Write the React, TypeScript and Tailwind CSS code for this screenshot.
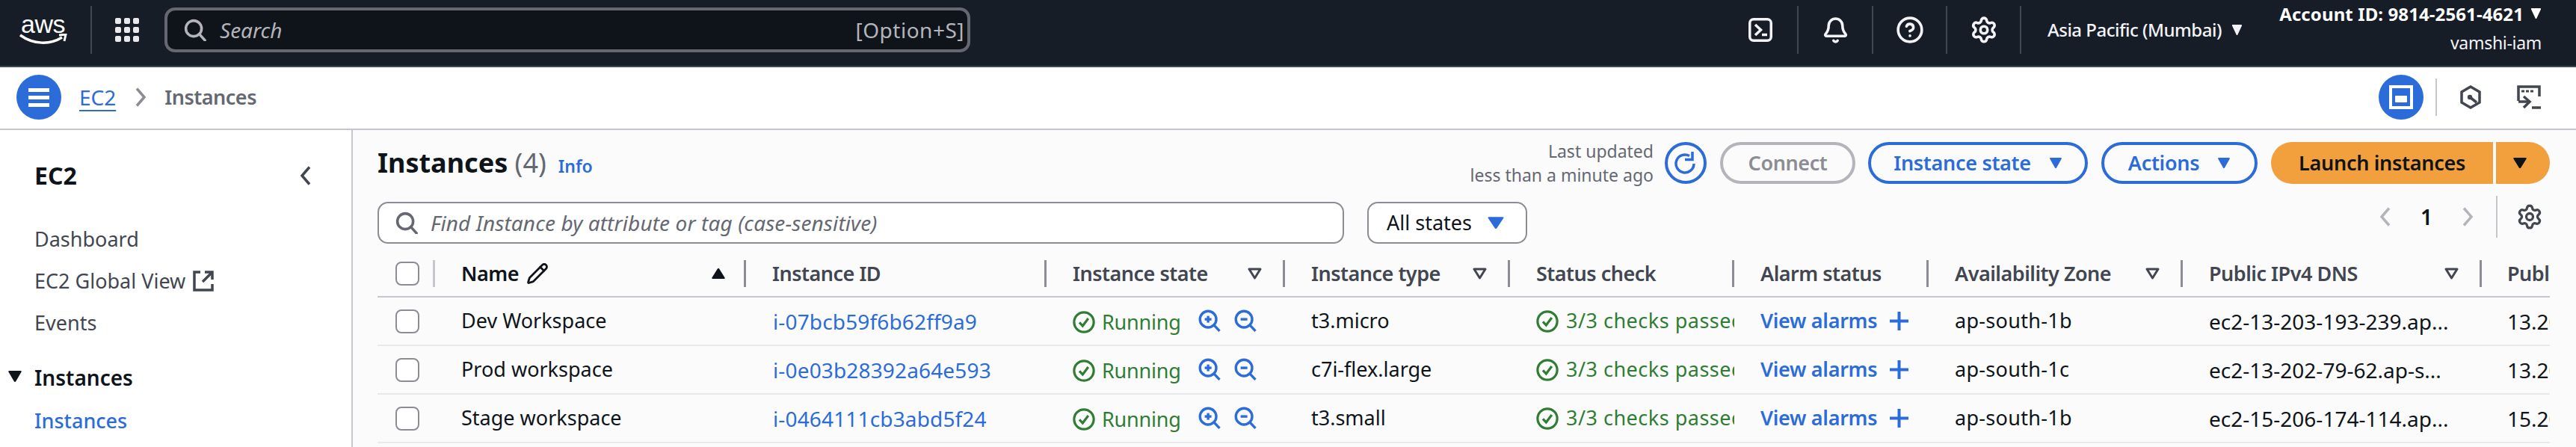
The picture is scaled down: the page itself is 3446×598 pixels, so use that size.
import { Bell, CircleHelp, Pencil, Settings } from "lucide-react";

const GRID_COLS = "grid grid-cols-[77px_416px_402px_319px_301px_300px_260px_340px_400px_91px]";

const INSTANCES = [
  { name: "Dev Workspace", id: "i-07bcb59f6b62ff9a9", type: "t3.micro", zone: "ap-south-1b", dns: "ec2-13-203-193-239.ap...", ip: "13.203.193.239" },
  { name: "Prod workspace", id: "i-0e03b28392a64e593", type: "c7i-flex.large", zone: "ap-south-1c", dns: "ec2-13-202-79-62.ap-s...", ip: "13.202.79.62" },
  { name: "Stage workspace", id: "i-0464111cb3abd5f24", type: "t3.small", zone: "ap-south-1b", dns: "ec2-15-206-174-114.ap...", ip: "15.206.174.114" },
];

const COLUMNS = [
  { label: "Instance ID" },
  { label: "Instance state", filter: true },
  { label: "Instance type", filter: true },
  { label: "Status check" },
  { label: "Alarm status" },
  { label: "Availability Zone", filter: true },
  { label: "Public IPv4 DNS", filter: true },
];

function Caret({ className }: { className: string }) {
  return (
    <svg viewBox="0 0 16 16" preserveAspectRatio="none" className={className} fill="currentColor" stroke="currentColor" strokeWidth="2" strokeLinejoin="round">
      <path d="M2 2h12L8 14z" />
    </svg>
  );
}

function Chevron({ left, className }: { left?: boolean; className: string }) {
  return (
    <svg viewBox="0 0 16 26" className={`h-[26px] w-[16px] shrink-0 ${className}`} fill="none" stroke="currentColor" strokeWidth="3.5">
      <path d={left ? "M14 1.5L4 13l10 11.5" : "M2 1.5L12 13 2 24.5"} />
    </svg>
  );
}

function FilterCaret() {
  return (
    <svg viewBox="0 0 19 16" className="h-[16px] w-[19px] text-[#424650]" fill="none" stroke="currentColor" strokeWidth="3">
      <path d="M2 2h15L9.5 14z" strokeLinejoin="round" />
    </svg>
  );
}

function SearchIcon({ className }: { className: string }) {
  return (
    <svg viewBox="0 0 16 16" className={className} fill="none" stroke="currentColor" strokeWidth="1.9">
      <circle cx="7" cy="7" r="5.6" />
      <path d="M11 11l4 4.4" strokeLinecap="round" />
    </svg>
  );
}

function StatusOk() {
  return (
    <svg viewBox="0 0 16 16" className="h-[30px] w-[30px] shrink-0 text-[#2f7d32]" fill="none" stroke="currentColor" strokeWidth="1.7">
      <circle cx="8" cy="8" r="7" />
      <path d="M4.8 8.2l2.3 2.5 4-5.4" />
    </svg>
  );
}

function ZoomIcon({ plus }: { plus?: boolean }) {
  return (
    <svg viewBox="0 0 16 16" className="h-[30px] w-[30px] text-[#2b6cd9]" fill="none" stroke="currentColor" strokeWidth="1.8">
      <circle cx="7" cy="7" r="5.8" />
      <path d="M11 11l4.2 4.4" />
      <path d="M4.6 7h4.8" />
      {plus && <path d="M7 4.6v4.8" />}
    </svg>
  );
}

function TopNav() {
  return (
    <header className="flex h-[90px] items-center border-b-2 border-[#414750] bg-[#161d26] pb-[8px] text-white">
      <div className="flex w-[121px] shrink-0 flex-col items-center pr-[6px]">
        <span className="font-['Liberation_Sans',sans-serif] text-[34px] font-normal leading-[22px] tracking-[-0.5px]">aws</span>
        <svg viewBox="0 0 64 15" className="mt-[2px] h-[15px] w-[64px]" fill="none" stroke="white">
          <path d="M1 2c18 13 40 13 56 3" strokeWidth="3.5" />
          <path d="M53 2l9-1-2 9" strokeWidth="3" />
        </svg>
      </div>
      <div className="h-[64px] w-[2px] bg-[#414750]" />
      <div className="ml-[31px] grid w-[32px] shrink-0 grid-cols-3 gap-[4px]">
        {Array.from({ length: 9 }).map((_, i) => (
          <span key={i} className="h-[8px] rounded-[2px] bg-[#e8e8ed]" />
        ))}
      </div>
      <div className="ml-[34px] flex h-[60px] w-[1078px] shrink-0 items-center rounded-[14px] border-4 border-[#656871] bg-[#0f141a] pl-[22px] pr-[4px] text-[#b4b4bb]">
        <SearchIcon className="h-[30px] w-[30px]" />
        <span className="ml-[18px] text-[28px] italic">Search</span>
        <span className="ml-auto text-[28px] tracking-[0.5px]">[Option+S]</span>
      </div>
      <div className="flex-1" />
      <div className="flex h-[64px] w-[100px] items-center justify-center border-r-2 border-[#414750]">
        <svg viewBox="0 0 32 32" className="h-[32px] w-[32px]" fill="none" stroke="#f3f3f7" strokeWidth="3.5">
          <rect x="1.75" y="1.75" width="28.5" height="28.5" rx="5" />
          <path d="M9 9l7.5 7L9 23" />
          <path d="M18 22.5h7" />
        </svg>
      </div>
      <div className="flex h-[64px] w-[100px] items-center justify-center border-r-2 border-[#414750]">
        <Bell size={37} strokeWidth={2.3} color="#f3f3f7" />
      </div>
      <div className="flex h-[64px] w-[99px] items-center justify-center border-r-2 border-[#414750]">
        <CircleHelp size={38} strokeWidth={2.3} color="#f3f3f7" />
      </div>
      <div className="flex h-[64px] w-[99px] items-center justify-center border-r-2 border-[#414750]">
        <Settings size={38} strokeWidth={2.3} color="#f3f3f7" />
      </div>
      <div className="flex w-[344px] items-center pl-[35px] text-[24px] font-medium tracking-[-0.5px] text-[#f3f3f7]">
        <span>Asia Pacific (Mumbai)</span>
        <Caret className="ml-[13px] h-[16px] w-[15px]" />
      </div>
      <div className="-mt-[5px] flex w-[352px] flex-col items-end text-[24px] leading-[39px]">
        <div className="flex items-center font-bold tracking-[0.1px]">
          <span>Account ID: 9814-2561-4621</span>
          <Caret className="ml-[9px] h-[16px] w-[15px]" />
        </div>
        <span className="text-[23px] tracking-[-0.3px] text-[#f3f3f7]">vamshi-iam</span>
      </div>
      <div className="w-[46px]" />
    </header>
  );
}

function Breadcrumbs() {
  return (
    <div className="flex h-[84px] items-center border-b-2 border-[#c6c6cd] bg-white pb-[2px] pl-[22px]">
      <div className="flex h-[60px] w-[60px] flex-col items-center justify-center gap-[5px] rounded-full bg-[#2b6cd9]">
        <span className="h-[5px] w-[28px] bg-white" />
        <span className="h-[5px] w-[28px] bg-white" />
        <span className="h-[5px] w-[28px] bg-white" />
      </div>
      <a className="ml-[24px] text-[28px] text-[#2b6cd9] underline underline-offset-[6px]">EC2</a>
      <Chevron className="ml-[26px] text-[#8c8c94]" />
      <span className="ml-[23px] text-[27px] font-semibold tracking-[-0.5px] text-[#656871]">Instances</span>
      <div className="ml-auto flex h-[60px] w-[60px] items-center justify-center rounded-full bg-[#2b6cd9]">
        <svg viewBox="0 0 32 32" className="h-[32px] w-[32px]" fill="none">
          <rect x="2" y="2" width="28" height="28" stroke="white" strokeWidth="4" />
          <rect x="8" y="14" width="16" height="9" rx="1" fill="white" />
        </svg>
      </div>
      <div className="ml-[16px] h-[50px] w-[2px] bg-[#c6c6cd]" />
      <svg viewBox="0 0 28 32" className="ml-[31px] h-[32px] w-[28px]" fill="none" stroke="#424650" strokeWidth="3.5">
        <path d="M14 2l12 7v14l-12 7-12-7V9z" />
        <path d="M13 16l9 7" />
        <circle cx="13" cy="16" r="3.2" fill="#424650" stroke="none" />
      </svg>
      <svg viewBox="0 0 32 32" className="ml-[48px] mr-[47px] h-[32px] w-[32px]" fill="none" stroke="#424650" strokeWidth="3.5">
        <path d="M2 21V2h28v13" />
        <path d="M6 8h4M12 8h4M18 8h4" strokeWidth="3" />
        <path d="M2 22h15" />
        <path d="M9 15l8 7-8 8" />
        <path d="M20 30h12" />
      </svg>
    </div>
  );
}

function Sidebar() {
  return (
    <aside className="w-[472px] shrink-0 border-r-2 border-[#c6c6cd] bg-white pl-[46px] text-[#424650]">
      <div className="flex h-[118px] items-center justify-between pr-[54px] pt-[4px]">
        <span className="text-[32px] font-bold text-[#0f141a]">EC2</span>
        <Chevron left className="text-[#424650]" />
      </div>
      <div className="flex h-[56px] items-center text-[27px]">Dashboard</div>
      <div className="flex h-[56px] items-center text-[27px]">
        EC2 Global View
        <svg viewBox="0 0 28 28" className="ml-[10px] h-[28px] w-[28px]" fill="none" stroke="#424650" strokeWidth="3.5">
          <path d="M10 2H2v24h24v-8" />
          <path d="M16 2h10v10M26 2L13 15" />
        </svg>
      </div>
      <div className="flex h-[56px] items-center text-[27px]">Events</div>
      <div className="relative mt-[17px] flex h-[56px] items-center text-[28px] font-semibold text-[#0f141a]">
        <Caret className="absolute -left-[36px] top-[18px] h-[17px] w-[20px]" />
        Instances
      </div>
      <div className="mt-[2px] flex h-[56px] items-center text-[27px] font-medium text-[#2b6cd9]">Instances</div>
    </aside>
  );
}

function ToolbarButton({ label, width }: { label: string; width: string }) {
  return (
    <button className={`flex h-[56px] items-center justify-center gap-[24px] rounded-full border-4 border-[#2b6cd9] text-[27px] font-semibold tracking-[-0.3px] text-[#2b6cd9] ${width}`}>
      {label}
      <Caret className="h-[16px] w-[18px]" />
    </button>
  );
}

function Toolbar() {
  return (
    <>
      <div className="flex h-[56px] items-center">
        <h1 className="text-[36px] font-bold text-[#0f141a]">
          Instances <span className="font-normal text-[#656871]">(4)</span>
        </h1>
        <a className="ml-[16px] mt-[8px] text-[23px] font-semibold text-[#2b6cd9]">Info</a>
        <div className="ml-auto mr-[15px] text-right text-[23px] leading-[32px] text-[#656871]">
          <div>Last updated</div>
          <div>less than a minute ago</div>
        </div>
        <div className="flex h-[56px] w-[56px] items-center justify-center rounded-full border-4 border-[#2b6cd9] text-[#2b6cd9]">
          <svg viewBox="0 0 32 32" className="h-[32px] w-[32px]" fill="none" stroke="currentColor" strokeWidth="3.5">
            <path d="M27 17A12 12 0 1 1 21 6.6" />
            <path d="M25 1v10.5H15" />
          </svg>
        </div>
        <div className="ml-[18px] flex h-[56px] w-[181px] items-center justify-center rounded-full border-4 border-[#b4b4bb] text-[27px] font-semibold tracking-[-0.4px] text-[#8c8c94]">
          Connect
        </div>
        <div className="ml-[17px] flex gap-[18px]">
          <ToolbarButton label="Instance state" width="w-[294px]" />
          <ToolbarButton label="Actions" width="w-[209px]" />
        </div>
        <div className="ml-[18px] flex h-[56px] overflow-hidden rounded-full text-[#0f141a]">
          <div className="flex w-[297px] items-center justify-center bg-[#f2a03d] text-[27px] font-semibold tracking-[-0.3px]">Launch instances</div>
          <div className="ml-[4px] flex w-[72px] items-center justify-center bg-[#f2a03d]">
            <Caret className="mr-[8px] h-[16px] w-[20px]" />
          </div>
        </div>
      </div>
      <div className="mt-[24px] flex h-[56px] items-center">
        <div className="flex h-[56px] w-[1293px] items-center rounded-[14px] border-2 border-[#8c8c94] bg-white pl-[22px] text-[#656871]">
          <SearchIcon className="h-[30px] w-[30px] text-[#656871]" />
          <span className="ml-[17px] text-[28px] italic tracking-[0.1px]">Find Instance by attribute or tag (case-sensitive)</span>
        </div>
        <div className="ml-[31px] flex h-[56px] w-[214px] items-center gap-[20px] rounded-[14px] border-2 border-[#8c8c94] bg-white pl-[24px] text-[27px] text-[#0f141a]">
          All states
          <Caret className="h-[18px] w-[24px] text-[#2b6cd9]" />
        </div>
        <div className="mb-[16px] ml-auto flex h-[56px] items-center text-[#0f141a]">
          <Chevron left className="text-[#b4b4bb]" />
          <span className="mx-[40px] text-[28px] font-semibold">1</span>
          <Chevron className="text-[#b4b4bb]" />
          <div className="ml-[29px] flex h-[56px] items-center border-l-2 border-[#c6c6cd] pl-[25px] pr-[9px]">
            <Settings size={36} strokeWidth={2.2} color="#424650" />
          </div>
        </div>
      </div>
    </>
  );
}

function InstancesTable() {
  return (
    <div className="overflow-hidden">
      <div className={`${GRID_COLS} border-b-2 border-[#c6c6cd] pb-[12px] pt-[22px] text-[27px] font-semibold tracking-[-0.5px] text-[#424650]`}>
        <div className="flex h-[36px] items-center border-r-[3px] border-[#c6c6cd] pl-[24px]">
          <span className="h-[32px] w-[32px] rounded-[8px] border-2 border-[#8c8c94] bg-white" />
        </div>
        <div className="flex h-[36px] items-center border-r-[3px] border-[#8c8c94] pl-[35px] pr-[24px] text-[#0f141a]">
          Name
          <Pencil className="ml-[10px]" size={30} strokeWidth={2.2} />
          <Caret className="ml-auto h-[16px] w-[20px] rotate-180" />
        </div>
        {COLUMNS.map((col) => (
          <div key={col.label} className="flex h-[36px] items-center justify-between border-r-[3px] border-[#8c8c94] pl-[35px] pr-[28px]">
            {col.label}
            {col.filter && <FilterCaret />}
          </div>
        ))}
        <div className="flex h-[36px] items-center overflow-hidden whitespace-nowrap pl-[34px]">Public IPv4 address</div>
      </div>
      {INSTANCES.map((row) => (
        <div key={row.id} className={`${GRID_COLS} h-[65px] items-center border-b-2 border-[#e8e8ed] text-[27px] text-[#0f141a] first:h-[67px] first:pt-[2px]`}>
          <div className="flex pl-[24px]">
            <span className="h-[32px] w-[32px] rounded-[8px] border-2 border-[#8c8c94] bg-white" />
          </div>
          <div className="pl-[35px]">{row.name}</div>
          <a className="pl-[36px] text-[28px] tracking-[0.15px] text-[#2b6cd9]">{row.id}</a>
          <div className="flex items-center pl-[35px] text-[#2f7d32]">
            <span className="mt-[3px] flex items-center">
              <StatusOk />
              <span className="ml-[9px] w-[105px] tracking-[-0.2px]">Running</span>
            </span>
            <span className="ml-[24px] -mt-[2px]"><ZoomIcon plus /></span>
            <span className="ml-[18px] -mt-[2px]"><ZoomIcon /></span>
          </div>
          <div className="pl-[35px]">{row.type}</div>
          <div className="flex items-center overflow-hidden whitespace-nowrap pl-[35px] text-[#2f7d32]">
            <StatusOk />
            <span className="ml-[10px] tracking-[0.5px]">3/3 checks passed</span>
          </div>
          <div className="flex items-center pl-[35px] font-semibold tracking-[-0.3px] text-[#2b6cd9]">
            <span className="w-[173px]">View alarms</span>
            <svg viewBox="0 0 25 25" className="h-[25px] w-[25px]" fill="none" stroke="currentColor" strokeWidth="4">
              <path d="M12.5 0v25M0 12.5h25" />
            </svg>
          </div>
          <div className="pl-[35px] tracking-[0.3px]">{row.zone}</div>
          <div className="overflow-hidden whitespace-nowrap pl-[35px] text-[28px]">{row.dns}</div>
          <div className="overflow-hidden whitespace-nowrap pl-[34px] text-[28px]">{row.ip}</div>
        </div>
      ))}
    </div>
  );
}

export default function App() {
  return (
    <div className="flex h-[598px] w-[3446px] flex-col overflow-hidden bg-white font-['Noto_Sans',sans-serif]">
      <TopNav />
      <Breadcrumbs />
      <div className="flex flex-1 overflow-hidden">
        <Sidebar />
        <main className="flex-1 bg-[#fbfbfc] pl-[33px] pr-[35px] pt-[16px]">
          <Toolbar />
          <InstancesTable />
        </main>
      </div>
    </div>
  );
}
